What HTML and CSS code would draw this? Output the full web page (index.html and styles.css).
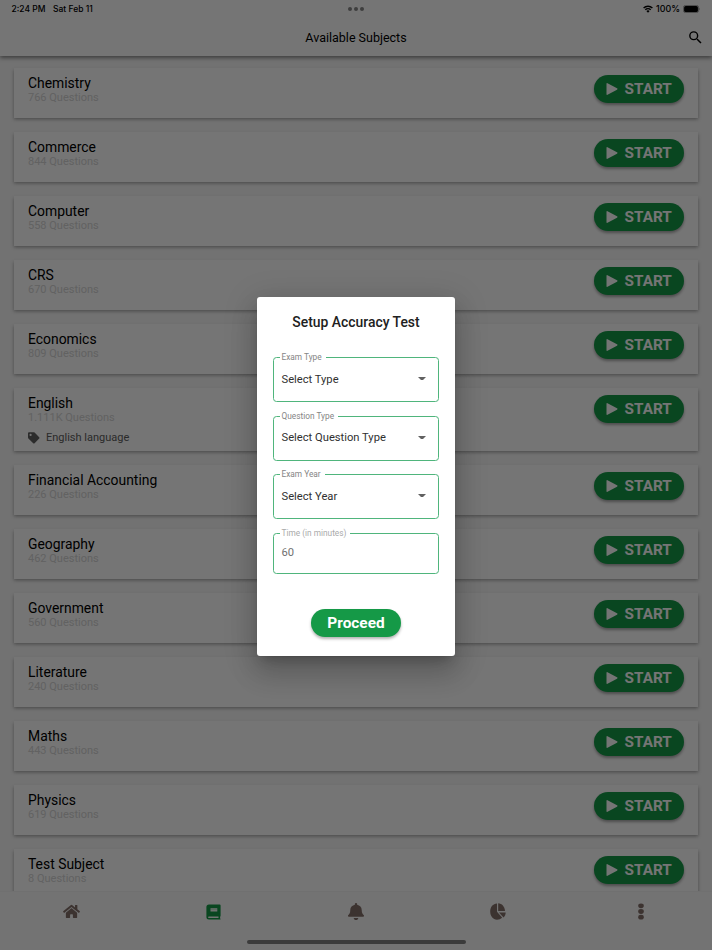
FILE: index.html
```
<!DOCTYPE html>
<html lang="en">
<head>
<meta charset="utf-8">
<title>Available Subjects</title>
<link rel="stylesheet" href="styles.css">
<script src="app.js" defer></script>
</head>
<body>
<div class="app">
  <header class="header">
    <div class="status">
      <div class="clock"><span>2:24 PM</span><span>Sat Feb 11</span></div>
      <div class="dots"><i></i><i></i><i></i></div>
      <div class="system">
        <svg width="10" height="8" viewBox="0 0 20 16"><g fill="none" stroke="#000" stroke-width="2.8"><path d="M1.2 6.2a12.5 12.5 0 0 1 17.6 0M4.6 9.6a7.7 7.7 0 0 1 10.8 0"/></g><path d="M10 15.5l-3.2-3.3a4.5 4.5 0 0 1 6.4 0z"/></svg>
        <span>100%</span>
        <svg width="18" height="8" viewBox="0 0 18 8"><rect x=".4" y=".4" width="15.2" height="7.2" rx="2.2" fill="none" stroke="#777" stroke-width=".7"/><rect x="1.1" y="1.1" width="13.8" height="5.8" rx="1.5"/><path d="M16.4 2.7q1.2 1.3 0 2.6z" fill="#777"/></svg>
      </div>
    </div>
    <div class="titlebar">
      <h1>Available Subjects</h1>
      <svg class="search" width="17" height="17" viewBox="0 0 24 24"><path d="M15.5 14h-.79l-.28-.27A6.47 6.47 0 0 0 16 9.5 6.5 6.5 0 1 0 9.5 16c1.61 0 3.09-.59 4.23-1.57l.27.28v.79l5 4.99L20.49 19zm-6 0a4.5 4.5 0 1 1 0-9 4.5 4.5 0 0 1 0 9z"/></svg>
    </div>
  </header>
  <main class="list" id="list"></main>
  <nav class="nav">
    <div class="tabs">
      <a><svg width="17" height="15" viewBox="0 0 576 512"><path d="M280 148L96 300v164a16 16 0 0 0 16 16h112a16 16 0 0 0 16-16V368a16 16 0 0 1 16-16h64a16 16 0 0 1 16 16v96a16 16 0 0 0 16 16h112a16 16 0 0 0 16-16V300L296 148a12 12 0 0 0-16 0zM572 251l-84-69V44a12 12 0 0 0-12-12h-56a12 12 0 0 0-12 12v72l-89-74a48 48 0 0 0-61 0L4 251a12 12 0 0 0-1 17l25 31a12 12 0 0 0 17 2L280 107a12 12 0 0 1 16 0l235 194a12 12 0 0 0 17-2l26-31a12 12 0 0 0-2-17z"/></svg></a>
      <a class="active"><svg width="15" height="16" viewBox="0 0 15 16"><path fill-rule="evenodd" d="M3 .5h10.6q1 0 1 1v10.3q0 .6-.5 1v1.6q.5.2.5.6 0 .5-.6.5H3Q.4 15.500.4 13V3.100Q.4.500 3 .5zM4.500 4.200v3.200h6.800V4.200zM3 12.500q-1 0-1 .8t1 .8h9.500v-1.600z"/><path fill-opacity=".45" d="M4.500 5.500h6.800v.6H4.500z"/></svg></a>
      <a><svg width="16" height="17" viewBox="0 0 448 512" preserveAspectRatio="none"><path d="M224 512c35 0 64-29 64-64H160c0 35 29 64 64 64zm215-150c-19-20-55-51-55-154 0-77-54-139-128-155V32a32 32 0 0 0-64 0v21C118 69 64 131 64 208c0 103-36 134-55 154-6 7-9 14-9 22 0 17 13 32 32 32h384c19 0 32-15 32-32 0-8-3-15-9-22z"/></svg></a>
      <a><svg width="16" height="17" viewBox="0 0 16 17"><path d="M7 .5v8.2l5.200 6A8 8 0 0 1 7 16.700C3 16.700.2 13.200.2 8.600S3 .6 7 .5z"/><path d="M8.200.2c3.600.1 6.600 3.400 6.800 7.800H8.200z"/><path d="M9 9.400h6.700c-.1 2.200-.9 3.900-2.200 5.100z"/></svg></a>
      <a><svg width="6" height="17" viewBox="0 0 6 17"><ellipse cx="3" cy="2.8" rx="2.8" ry="2.4"/><ellipse cx="3" cy="8.5" rx="2.8" ry="2.4"/><ellipse cx="3" cy="14.2" rx="2.8" ry="2.4"/></svg></a>
    </div>
    <div class="home-bar"></div>
  </nav>
</div>
<div class="backdrop">
  <form class="dialog">
    <h2>Setup Accuracy Test</h2>
    <fieldset><legend>Exam Type</legend><div class="value">Select Type<i class="caret"></i></div></fieldset>
    <fieldset><legend>Question Type</legend><div class="value">Select Question Type<i class="caret"></i></div></fieldset>
    <fieldset><legend>Exam Year</legend><div class="value">Select Year<i class="caret"></i></div></fieldset>
    <fieldset class="time"><legend>Time (in minutes)</legend><div class="value">60</div></fieldset>
    <button type="button" class="proceed">Proceed</button>
  </form>
</div>
</body>
</html>
```

FILE: styles.css
```
* { box-sizing: border-box; }
body {
  margin: 0;
  width: 712px;
  height: 950px;
  overflow: hidden;
  position: relative;
  font-family: Roboto, "Liberation Sans", sans-serif;
  color: #000;
}
h1, h2, p { margin: 0; font-weight: 400; }
svg { display: block; }

.app { height: 950px; display: flex; flex-direction: column; background: #f8f8f8; }

.header {
  height: 56px;
  flex: none;
  background: #fff;
  box-shadow: 0 2px 4px rgba(0, 0, 0, .45);
  z-index: 1;
}
.status {
  height: 18px;
  padding: 0 11px 0 11.5px;
  display: grid;
  grid-template-columns: 1fr auto 1fr;
  align-items: center;
  font: 500 8.5px/18px Inter, sans-serif;
}
.clock { display: flex; gap: 7.5px; }
.dots { display: flex; gap: 2px; }
.dots i { width: 4px; height: 4px; border-radius: 50%; background: #888; }
.system { display: flex; justify-content: flex-end; align-items: center; gap: 3px; }
.system span { font-size: 8.9px; }
.titlebar {
  height: 38px;
  padding: 0 8.5px;
  display: grid;
  grid-template-columns: 1fr auto 1fr;
  align-items: center;
}
.titlebar h1 { grid-column: 2; font-size: 12.5px; }
.search { justify-self: end; }

.list {
  flex: 1;
  min-height: 0;
  overflow: hidden;
  padding: 11.7px 14px 0;
  display: flex;
  flex-direction: column;
  gap: 14px;
}
.card {
  height: 50px;
  flex: none;
  padding: 7.3px 14px 0;
  display: flex;
  justify-content: space-between;
  align-items: flex-start;
  background: #fff;
  box-shadow: 0 1.5px 3.5px rgba(0, 0, 0, .36);
}
.card.tagged { height: 63px; }
.name { font-size: 13.9px; line-height: 17px; }
.count { font-size: 11px; line-height: 12px; color: #d5d5d5; }
.tag { display: flex; align-items: center; gap: 6px; margin-top: 6px; font-size: 11px; line-height: 16px; color: #5d5d5d; }
.start {
  width: 90.5px;
  height: 28px;
  display: flex;
  align-items: center;
  justify-content: center;
  gap: 6.8px;
  border-radius: 14px;
  background: #159947;
  box-shadow: 0 2px 3px rgba(0, 0, 0, .35);
  color: #fff;
  font-size: 15.3px;
  font-weight: 700;
}

.nav { height: 59px; flex: none; background: #fafafa; border-top: 1px solid #f4f4f4; display: flex; flex-direction: column; align-items: center; z-index: 1; }
.tabs { width: 100%; height: 39px; display: grid; grid-template-columns: repeat(5, 1fr); }
.tabs a { display: flex; align-items: center; justify-content: center; fill: #84706a; }
.tabs a.active { fill: #159947; }
.home-bar { width: 219px; height: 4px; margin-top: 9.3px; border-radius: 2px; background: #808080; }

.backdrop {
  position: absolute;
  inset: 0;
  z-index: 2;
  background: rgba(0, 0, 0, .54);
  display: flex;
  justify-content: center;
  align-items: flex-start;
  padding-top: 297px;
}
.dialog {
  width: 198.6px;
  height: 359px;
  padding: 16px 16px 0;
  display: flex;
  flex-direction: column;
  align-items: center;
  background: #fff;
  border-radius: 3px;
  box-shadow: 0 8px 11px -5px rgba(0, 0, 0, .2), 0 17px 27px 2px rgba(0, 0, 0, .14), 0 6px 32px 5px rgba(0, 0, 0, .12);
}
.dialog h2 { font-size: 13.9px; font-weight: 500; line-height: 19px; color: #212121; margin-bottom: 20.4px; }
fieldset {
  width: 166px;
  height: 50px;
  flex: none;
  margin: 0 0 8.4px;
  padding: 0 12.5px 0 7.5px;
  border: 1px solid #4fb57c;
  border-radius: 3.5px;
  min-width: 0;
}
legend { margin-left: -2px; padding: 0 4px 0 2px; font-size: 8.3px; line-height: 11px; color: #858585; }
.value { display: flex; align-items: center; justify-content: space-between; height: 32px; font-size: 11.2px; color: #303030; }
.caret { border: 4px solid transparent; border-width: 3.8px 3.6px 0; border-top-color: #616161; width: 7.2px; height: 4px; }
fieldset.time { height: 46px; margin-bottom: 0; }
.time legend { color: #aaa; }
.time .value { height: 28px; color: #707070; }
.proceed {
  width: 90px;
  height: 28px;
  flex: none;
  margin-top: 35.6px;
  padding: 0;
  border: 0;
  border-radius: 14px;
  background: #159947;
  box-shadow: 0 2px 3px rgba(0, 0, 0, .3);
  color: #fff;
  font: 700 15.4px/28px Roboto, sans-serif;
}
```

FILE: app.js
```
const subjects = [
  ["Chemistry", "766"], ["Commerce", "844"], ["Computer", "558"], ["CRS", "670"],
  ["Economics", "809"], ["English", "1.111K", "English language"],
  ["Financial Accounting", "226"], ["Geography", "462"], ["Government", "560"],
  ["Literature", "240"], ["Maths", "443"], ["Physics", "619"], ["Test Subject", "8"]
];
const tagIcon = '<svg width="12" height="12" viewBox="0 0 12 12"><path fill="#616161" fill-rule="evenodd" d="M0 1.2Q0 .2 1 .2h4.6q.6 0 1 .4l4.6 4.6q.7.7 0 1.4L6.6 11.2q-.7.7-1.4 0L.4 6.4Q0 6 0 5.4zM2.6 1.8a1.1 1.1 0 1 0 0 2.2 1.1 1.1 0 0 0 0-2.2z"/></svg>';
const playIcon = '<svg width="12" height="12" viewBox="0 0 12 12"><path fill="#fff" d="M.5.8Q.5-.3 1.5.2l9.5 5.1q1 .7 0 1.4l-9.5 5.1q-1 .5-1-.6z"/></svg>';
document.getElementById("list").innerHTML = subjects.map(([name, count, tag]) => `
  <section class="card${tag ? " tagged" : ""}">
    <div>
      <p class="name">${name}</p>
      <p class="count">${count} Questions</p>
      ${tag ? `<div class="tag">${tagIcon}<span>${tag}</span></div>` : ""}
    </div>
    <div class="start">${playIcon}<span>START</span></div>
  </section>`).join("");
```
